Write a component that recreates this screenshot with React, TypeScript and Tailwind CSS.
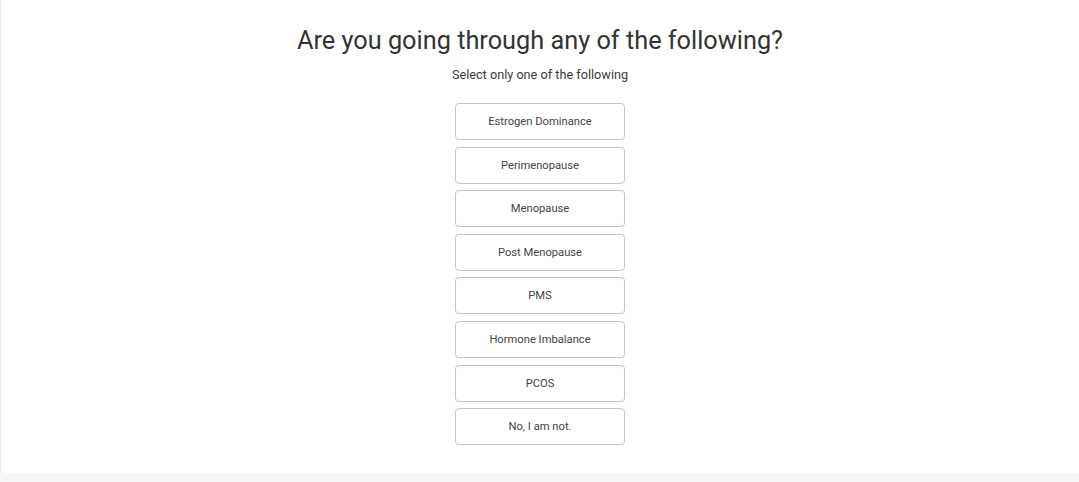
const options = [
  "Estrogen Dominance",
  "Perimenopause",
  "Menopause",
  "Post Menopause",
  "PMS",
  "Hormone Imbalance",
  "PCOS",
  "No, I am not.",
];

export default function App() {
  return (
    <div className="flex h-[482px] w-full flex-col bg-white font-['Roboto',sans-serif] text-[#333]">
      <div className="flex flex-1 flex-col items-center border-l border-[#e6e6e6] pt-[24px]">
        <h1 className="text-[25.3px] leading-[34px] font-normal">Are you going through any of the following?</h1>
        <p className="mt-[8px] text-[12.7px] leading-[18px] text-[#3a3a3a]">Select only one of the following</p>
        <div className="mt-[19px] flex flex-col gap-[6.6px]">
          {options.map((o) => (
            <button
              key={o}
              className="h-[37px] w-[170px] rounded-[4px] border border-[#c4c4c4] bg-white pt-[2px] text-[11.2px] text-[#444]"
            >
              {o}
            </button>
          ))}
        </div>
      </div>
      <div className="h-[9px] bg-[#f7f7f7]" />
    </div>
  );
}
